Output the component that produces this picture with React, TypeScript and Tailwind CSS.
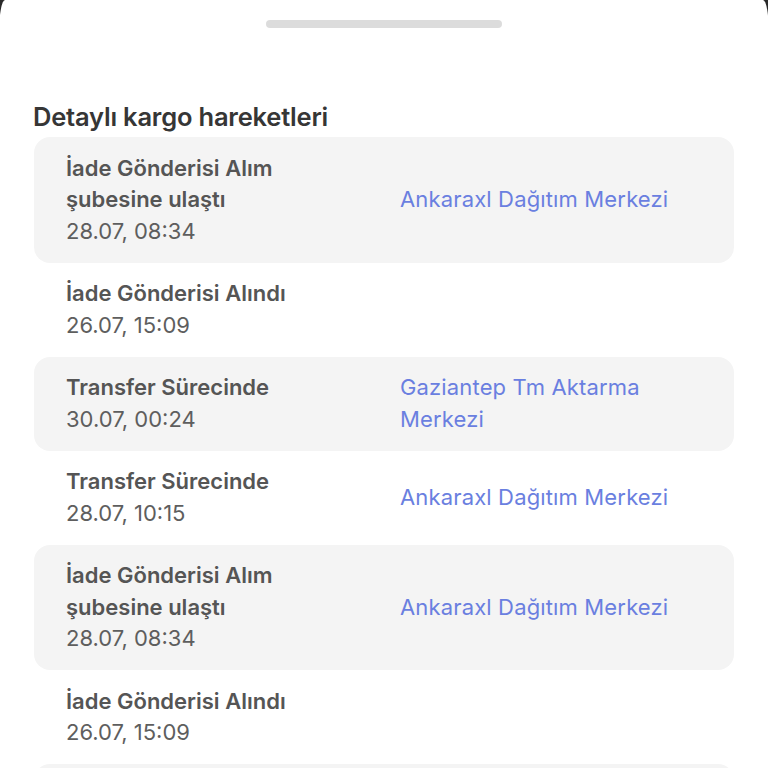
const rows = [
  { title: "İade Gönderisi Alım şubesine ulaştı", date: "28.07, 08:34", place: "Ankaraxl Dağıtım Merkezi", shaded: true },
  { title: "İade Gönderisi Alındı", date: "26.07, 15:09", place: "", shaded: false },
  { title: "Transfer Sürecinde", date: "30.07, 00:24", place: "Gaziantep Tm Aktarma Merkezi", shaded: true },
  { title: "Transfer Sürecinde", date: "28.07, 10:15", place: "Ankaraxl Dağıtım Merkezi", shaded: false },
  { title: "İade Gönderisi Alım şubesine ulaştı", date: "28.07, 08:34", place: "Ankaraxl Dağıtım Merkezi", shaded: true },
  { title: "İade Gönderisi Alındı", date: "26.07, 15:09", place: "", shaded: false },
];

export default function App() {
  return (
    <div className="h-[768px] overflow-hidden bg-[#2a2a2a]" style={{ fontFamily: "Inter, 'Noto Sans', sans-serif" }}>
      <div className="-mx-px h-full rounded-t-[6px_34px] bg-white">
        <div className="flex justify-center pt-5">
          <div className="h-2 w-[236px] rounded-full bg-[#dcdcdc]" />
        </div>
        <h1 className="mt-[73px] px-[34px] text-[25.5px] font-semibold leading-[32px] tracking-[-0.2px] text-[#363636]">
          Detaylı kargo hareketleri
        </h1>
        <div className="mt-[4px] flex flex-col px-[35px]">
          {rows.map((row, index) => (
            <div
              key={index}
              className={`grid grid-cols-[300px_1fr] items-center gap-[34px] rounded-[16px] px-8 py-[15.5px] text-[22px] leading-[31.5px] ${row.shaded ? "bg-[#f4f4f4]" : "bg-white"}`}
            >
              <div>
                <p className="font-semibold text-[#555555]">{row.title}</p>
                <p className="text-[#5e5e5e]">{row.date}</p>
              </div>
              <p className="pr-4 tracking-[0.15px] text-[#6a7fe0]">{row.place}</p>
            </div>
          ))}
          <div className="h-10 rounded-[16px] bg-[#f4f4f4]" />
        </div>
      </div>
    </div>
  );
}
